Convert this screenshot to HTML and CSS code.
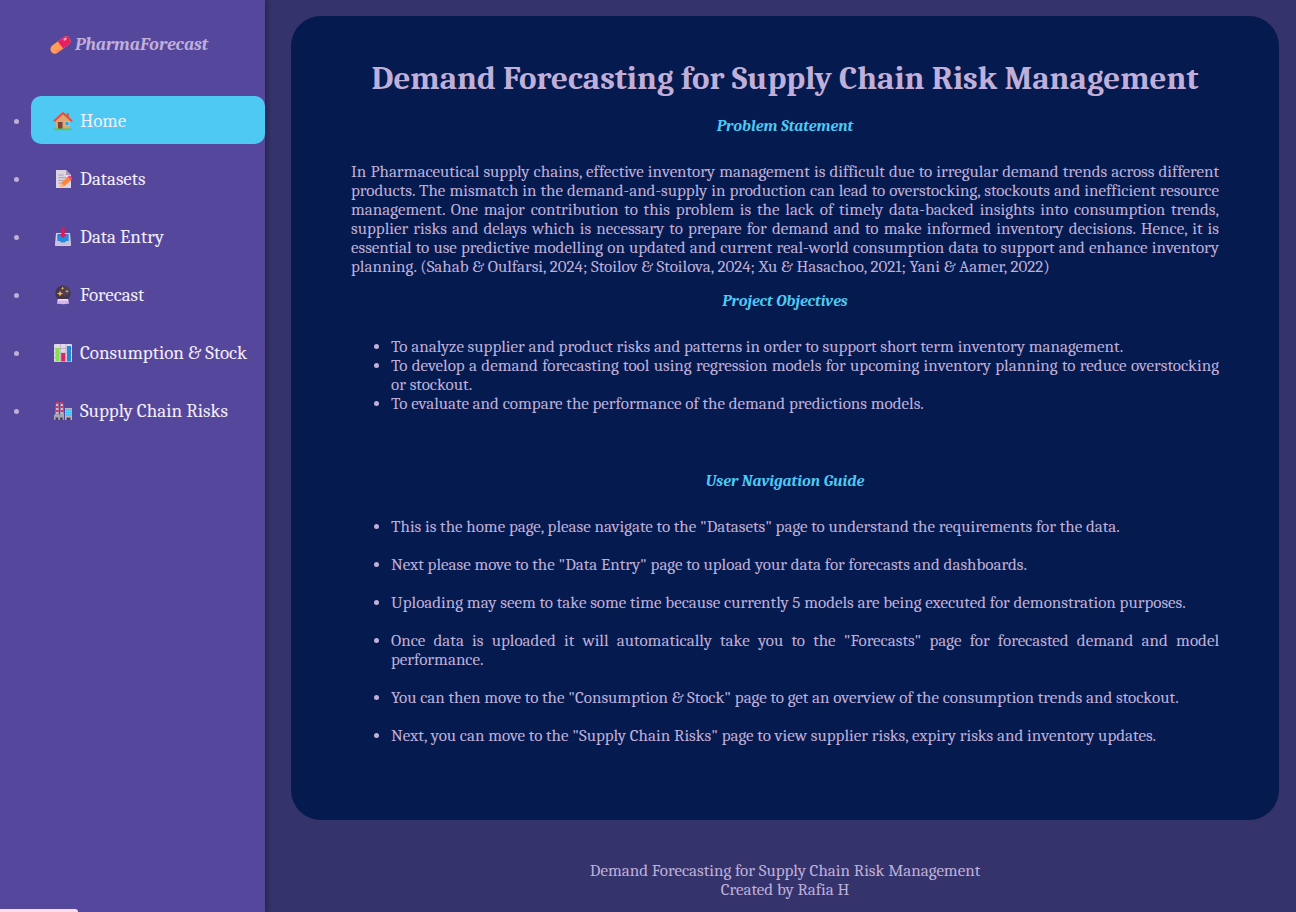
FILE: index.html
```html
<!DOCTYPE html>
<html lang="en">
<head>
<meta charset="utf-8">
<title>PharmaForecast</title>
<link rel="stylesheet" href="styles.css">
</head>
<body>
<aside class="sidebar">
  <h2 class="brand">
    <svg class="brand-icon" viewBox="0 0 22 20" aria-hidden="true"><g transform="rotate(-37 11 10)"><rect x="-1" y="5.300" width="24" height="9.400" rx="4.700" fill="#ff9d57"/><path d="M11 5.300h7.300a4.700 4.700 0 0 1 0 9.400H11z" fill="#e81e63"/><path d="M3 12.500q2 1.500 7 1.500" stroke="#ff7d76" stroke-width="1.400" fill="none"/><ellipse cx="18.500" cy="8" rx="2" ry="1.200" fill="#ffa6c9"/></g></svg>
    <span>PharmaForecast</span>
  </h2>
  <nav>
    <ul class="menu">
      <li class="menu-item"><a class="menu-link active" href="#home">
        <svg class="menu-icon" viewBox="0 0 20 20" aria-hidden="true"><path d="M3 9l7-6 7 6v9.500H3z" fill="#dda56f"/><path d="M13.500 2h2.500v5l-2.500-2z" fill="#b9734f"/><path d="M1 10.200L10 2l9 8.200" fill="none" stroke="#ef4b36" stroke-width="2"/><rect x="5" y="11" width="4.500" height="7" fill="#7b4439"/><rect x="12" y="10.500" width="4" height="4" fill="#2aa3f2" stroke="#f3c08b" stroke-width=".7"/><rect x="1" y="17.500" width="18" height="1.700" fill="#43cf68"/></svg>
        <span class="menu-text">Home</span></a></li>
      <li class="menu-item"><a class="menu-link" href="#datasets">
        <svg class="menu-icon" viewBox="0 0 20 20" aria-hidden="true"><path d="M3 1h10l5 5v13H3z" fill="#ddd4e3"/><path d="M13 1v5h5z" fill="#a99ab5"/><path d="M5.500 6h5M5.500 8.700h8M5.500 11.400h5M5.500 14h3" stroke="#a89cad" stroke-width="1"/><path d="M7 18l1.200-4.200L14.600 8l3.200 3.400-6.500 5.800z" fill="#ff8638"/><path d="M14.600 8l1.700-1.500q2 .2 3.200 3.200l-1.700 1.700z" fill="#f14674"/><path d="M7 18l1.200-4.200 3.100 3.400z" fill="#ffba81"/></svg>
        <span class="menu-text">Datasets</span></a></li>
      <li class="menu-item"><a class="menu-link" href="#data-entry">
        <svg class="menu-icon" viewBox="0 0 20 20" aria-hidden="true"><path d="M3 6h14l1 12q0 1-1 1H3q-1 0-1-1z" fill="#d5cfe5"/><path d="M4.300 7h11.400v8.500H4.300z" fill="#2688df"/><path d="M3 14h4l1 2h4l1-2h4.500v4.500H2.500z" fill="#c8c1d8"/><path d="M8.300 1h3.400v6H14l-4 4-4-4h2.300z" fill="#d61d59"/></svg>
        <span class="menu-text">Data Entry</span></a></li>
      <li class="menu-item"><a class="menu-link" href="#forecast">
        <svg class="menu-icon" viewBox="0 0 20 20" aria-hidden="true"><circle cx="10" cy="8.300" r="7.700" fill="#413548"/><circle cx="12" cy="6" r="5" fill="#58465b" opacity=".6"/><path d="M5 14h10l1.200 4.500q-6.200 1.500-12.400 0z" fill="#d4b5e8"/><path d="M5 14h10l.4 1.500H4.600z" fill="#f0ddf7"/><path d="M7 5.500l.9 2.200 2.300.8-2.300.9L7 11.600l-.9-2.200-2.300-.9 2.300-.8zM9.500 1.500l.5 1.300 1.300.5-1.300.5-.5 1.200L9 3.800l-1.200-.5L9 2.800zM14 4.500l.5 1.300 1.300.5-1.300.5-.5 1.300-.5-1.300-1.300-.5 1.300-.5z" fill="#ffb24f"/></svg>
        <span class="menu-text">Forecast</span></a></li>
      <li class="menu-item"><a class="menu-link" href="#consumption">
        <svg class="menu-icon" viewBox="0 0 20 20" aria-hidden="true"><rect x="1" y="1" width="18" height="18" rx="1" fill="#e0d8e8"/><path d="M1 5.500h18M1 10h18M1 14.500h18M7.500 1v18M13 1v18" stroke="#b9afc4" stroke-width=".8"/><rect x="2.500" y="5" width="4" height="13.500" fill="#87dc50"/><rect x="8.200" y="10" width="4" height="8.500" fill="#dc245f"/><rect x="14" y="3" width="4" height="15.500" fill="#2784d5"/></svg>
        <span class="menu-text">Consumption &amp; Stock</span></a></li>
      <li class="menu-item"><a class="menu-link" href="#risks">
        <svg class="menu-icon" viewBox="0 0 20 20" aria-hidden="true"><path d="M3 1h2.300l.5 13H2.500zM7.700 1H10l.5 13H7.200z" fill="#c5c0d0"/><path d="M3 1h2.300v2H3zm-.1 4h2.500v2H2.900zm-.1 4h2.700v2H2.800zM7.700 1H10v2H7.700zm-.1 4h2.500v2H7.600zm-.1 4h2.700v2H7.500z" fill="#df325e"/><path d="M1 14l5-2.500V14l5-2.500V19H1z" fill="#aaa3b2"/><rect x="12" y="7" width="7" height="12" fill="#b9b5c5"/><path d="M13 9h5.500M13 11.500h5.500M13 14h5.500" stroke="#25bdf1" stroke-width="1.500" stroke-dasharray="1.300 .7"/><path d="M2.500 16.500h2.700V19H2.500zm4.500 0h2.700V19H7zm6.500 0h4V19h-4z" fill="#4b4052"/></svg>
        <span class="menu-text">Supply Chain Risks</span></a></li>
    </ul>
  </nav>
</aside>
<div class="page">
  <main class="card">
    <h1 class="title">Demand Forecasting for Supply Chain Risk Management</h1>
    <h2 class="subtitle">Problem Statement</h2>
    <p class="statement">In Pharmaceutical supply chains, effective inventory management is difficult due to irregular demand trends across different products. The mismatch in the demand-and-supply in production can lead to overstocking, stockouts and inefficient resource management. One major contribution to this problem is the lack of timely data-backed insights into consumption trends, supplier risks and delays which is necessary to prepare for demand and to make informed inventory decisions. Hence, it is essential to use predictive modelling on updated and current real-world consumption data to support and enhance inventory planning. (Sahab &amp; Oulfarsi, 2024; Stoilov &amp; Stoilova, 2024; Xu &amp; Hasachoo, 2021; Yani &amp; Aamer, 2022)</p>
    <h2 class="subtitle">Project Objectives</h2>
    <ul class="list objectives">
      <li>To analyze supplier and product risks and patterns in order to support short term inventory management.</li>
      <li>To develop a demand forecasting tool using regression models for upcoming inventory planning to reduce overstocking or stockout.</li>
      <li>To evaluate and compare the performance of the demand predictions models.</li>
    </ul>
    <h2 class="subtitle">User Navigation Guide</h2>
    <ul class="list guide">
      <li>This is the home page, please navigate to the "Datasets" page to understand the requirements for the data.</li>
      <li>Next please move to the "Data Entry" page to upload your data for forecasts and dashboards.</li>
      <li>Uploading may seem to take some time because currently 5 models are being executed for demonstration purposes.</li>
      <li>Once data is uploaded it will automatically take you to the "Forecasts" page for forecasted demand and model performance.</li>
      <li>You can then move to the "Consumption &amp; Stock" page to get an overview of the consumption trends and stockout.</li>
      <li>Next, you can move to the "Supply Chain Risks" page to view supplier risks, expiry risks and inventory updates.</li>
    </ul>
  </main>
  <footer class="footer">
    <div>Demand Forecasting for Supply Chain Risk Management</div>
    <div>Created by Rafia H</div>
  </footer>
</div>
<div class="status"></div>
</body>
</html>
```
FILE: styles.css
```css
* { box-sizing: border-box; }
body {
  margin: 0;
  min-height: 100vh;
  display: flex;
  background: #34336b;
  color: #bfafd9;
  font: 17px/19px Cambria, Caladea, "Liberation Serif", serif;
}
.sidebar {
  flex: 0 0 265px;
  background: #55479c;
  box-shadow: 2px 0 5px rgba(0, 0, 0, 0.3);
}
.brand {
  display: flex;
  align-items: center;
  gap: 4px;
  margin: 33px 0 39px 50px;
  font-size: 18px;
  line-height: 24px;
  font-style: italic;
}
.brand-icon { width: 21px; height: 20px; }
.menu {
  display: flex;
  flex-direction: column;
  gap: 10px;
  margin: 0;
  padding: 0 0 0 31px;
}
.menu-link {
  display: flex;
  align-items: center;
  gap: 7px;
  padding: 13px 0 11px 22px;
  border-radius: 10px;
  color: #f3edfa;
  font-size: 19px;
  line-height: 24px;
  text-decoration: none;
}
.menu-link.active { background: #4dc9f4; }
.menu-icon { width: 20px; height: 20px; }
.menu-text { align-self: baseline; }
.page {
  flex: 1;
  min-width: 0;
  padding: 16px 17px 13px 26px;
}
.card {
  padding: 43px 60px 75px;
  border-radius: 30px;
  background: #051a4e;
}
.title {
  margin: 0 0 20px;
  font-size: 33px;
  line-height: 38px;
  text-align: center;
}
.subtitle {
  margin: 16px 0 26px;
  color: #4dc9f4;
  font-size: 16px;
  line-height: 19px;
  font-style: italic;
  text-align: center;
}
.statement {
  margin: 0 0 16px;
  text-align: justify;
}
.list {
  margin: 0;
  padding-left: 40px;
  text-align: justify;
}
.objectives { margin-bottom: 59px; }
.guide {
  display: flex;
  flex-direction: column;
  gap: 19px;
}
.footer {
  margin-top: 41px;
  text-align: center;
}
.status {
  position: fixed;
  left: 0;
  bottom: 0;
  width: 78px;
  height: 3px;
  border-top-right-radius: 3px;
  background: #ffdcec;
}
```
